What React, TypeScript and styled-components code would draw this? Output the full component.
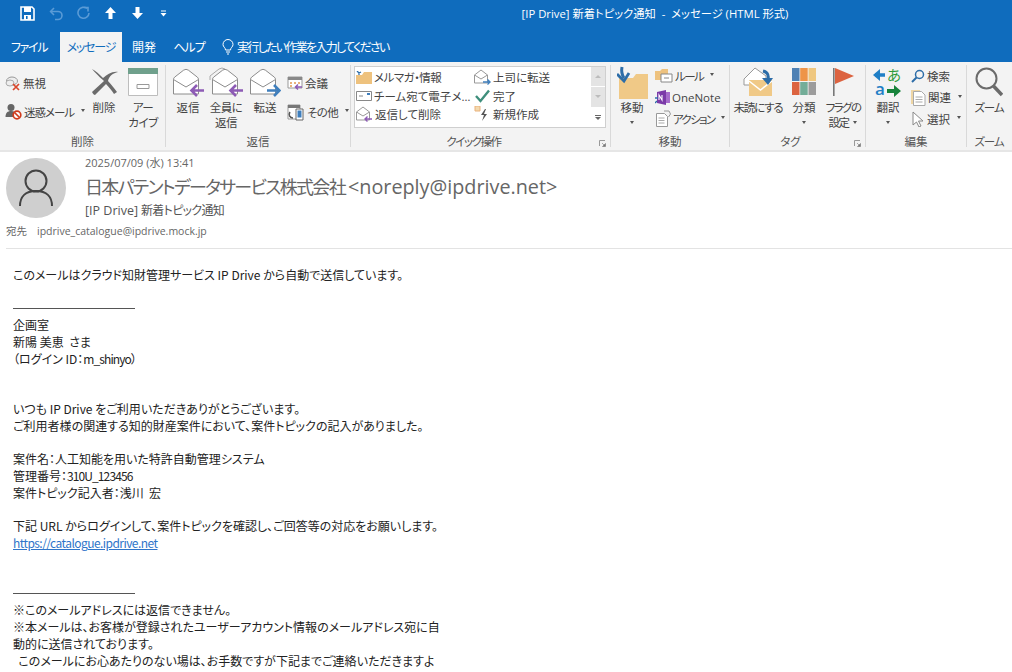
import React from "react";
import styled, { createGlobalStyle } from "styled-components";

const Global = createGlobalStyle`
  html, body { margin: 0; padding: 0; background: #fff; }
  body { font-family: "Open Sans", "Noto Sans CJK JP", sans-serif; font-feature-settings: "palt"; overflow: hidden; }
`;
const Page = styled.div`width: 1012px; height: 672px; overflow: hidden; display: flex; flex-direction: column; background: #fff;`;
const TitleBar = styled.div`height: 32px; padding-bottom: 6px; box-sizing: border-box; background: #0f6cbd; display: flex; align-items: center; color: #fff; flex: none;`;
const QuickAccess = styled.div`display: flex; align-items: center; width: 180px; padding-left: 19px; box-sizing: border-box; gap: 10px;`;
const QatSlot = styled.span`width: 17px; height: 17px; display: flex; align-items: center; justify-content: center; margin-right: ${p => p.$mr ?? 0}px;`;
const TitleText = styled.div`flex: 1; text-align: center; font-size: 11.3px; padding-left: 118px; white-space: pre;`;
const TabBar = styled.div`height: 30px; background: #0f6cbd; display: flex; align-items: stretch; padding-left: 11px; font-size: 12px; color: #fff; flex: none;`;
const Tab = styled.div`display: flex; align-items: center; justify-content: center; white-space: nowrap; width: ${p => p.$w}px; margin-right: ${p => p.$mr ?? 0}px; letter-spacing: ${p => p.$ls ?? 0}px;
  ${p => p.$active ? "background:#f3f3f3;color:#0f6cbd;" : ""}`;
const Search = styled.div`display: flex; align-items: center; gap: 3px; margin-left: 17px; letter-spacing: -1.7px;`;
const Ribbon = styled.div`height: 90px; background: #f3f3f3; display: flex; color: #444; font-size: 11.5px; box-sizing: border-box; flex: none; border-bottom: 2px solid #e6e6e6;`;
const Group = styled.section`width: ${p => p.$w}px; height: 88px; box-sizing: border-box; padding-left: ${p => p.$pl ?? 0}px; display: flex; flex-direction: column; position: relative; flex: none;
  &::after { content: ""; position: absolute; right: 0; top: 3px; bottom: 3px; width: 1px; background: ${p => p.$last ? "transparent" : "#d9d9d9"}; }`;
const GroupBody = styled.div`height: 72px; display: flex;`;
const GroupLabel = styled.div`height: 16px; line-height: 16px; margin-left: ${p => -(p.$pl ?? 0)}px; text-align: center; font-size: 11.5px; color: #555; margin-right: ${p => p.$mr ?? 1}px; letter-spacing: ${p => p.$ls ?? 0}px;`;
const Launcher = styled.span`position: absolute; right: 5px; bottom: 3px; width: 7px; height: 7px; display: flex;`;
const Large = styled.div`width: ${p => p.$w}px; flex: none; display: flex; flex-direction: column; align-items: center; padding-top: 4px;`;
const LargeIcon = styled.div`height: 32px; display: flex; align-items: center; justify-content: center;`;
const LargeLabel = styled.div`margin-top: 2px; line-height: 15px; text-align: center; white-space: nowrap; display: flex; flex-direction: column; align-items: center; letter-spacing: ${p => p.$ls ?? 0}px;`;
const Stack = styled.div`display: flex; flex-direction: column; flex: none; padding-top: ${p => p.$top}px; margin-left: ${p => p.$ml ?? 0}px; width: ${p => p.$w}px;`;
const Small = styled.div`height: ${p => p.$h}px; display: flex; align-items: center; gap: 2px; white-space: nowrap; svg { flex: none; }`;
const SmallText = styled.span`letter-spacing: ${p => p.$ls ?? 0}px;`;
const Caret = styled.span`display: inline-block; width: 0; height: 0; border-left: 2.5px solid transparent; border-right: 2.5px solid transparent; border-top: 3px solid #555; margin: ${p => p.$block ? "6px 0" : "0 0 2px 5px"}; vertical-align: middle;`;
const QuickBox = styled.div`margin-top: 4px; width: 252px; height: 62px; display: flex; box-sizing: border-box; border: 1px solid #cfcfcf; background: #fff;`;
const QuickGrid = styled.div`flex: 1; display: grid; grid-template-columns: 118px 1fr; grid-auto-rows: 18.5px; padding: 1px 0 0 1px; font-size: 11.5px;`;
const QuickItem = styled.div`display: flex; align-items: center; gap: 2px; white-space: nowrap; letter-spacing: ${p => p.$ls ?? 0}px; svg { flex: none; }`;
const Scroller = styled.div`width: 14px; display: flex; flex-direction: column; gap: 1px; background: #fff;`;
const ScrollBtn = styled.div`flex: 1; display: flex; flex-direction: column; gap: 1px; align-items: center; justify-content: center; background: ${p => p.$on ? "#fff" : "#e4e4e4"};`;
const ScrollBar = styled.span`width: 6px; height: 1px; background: #666;`;
const Tri = styled.span`width: 0; height: 0; border-left: 3px solid transparent; border-right: 3px solid transparent;
  ${p => p.$up ? "border-bottom: 3px solid #bcbcbc;" : `border-top: 3px solid ${p.$on ? "#666" : "#bcbcbc"};`}`;
const Header = styled.header`height: 97px; margin-left: 6px; flex: none; box-sizing: border-box; border-bottom: 1px solid #e3e3e3; color: #666; display: flex; flex-direction: column;`;
const HeaderTop = styled.div`display: flex; height: 69px;`;
const Avatar = styled.div`width: 60px; height: 60px; border-radius: 50%; background: #cfcfcf; margin-top: 6px; display: flex; align-items: center; justify-content: center; flex: none;`;
const HeaderText = styled.div`margin-left: 19px; display: flex; flex-direction: column;`;
const DateText = styled.div`font-size: 11px; line-height: 16px; margin-top: 3px;`;
const Sender = styled.div`font-size: 19.8px; line-height: 30px; margin-top: 1px; white-space: nowrap; color: #666; display: flex; align-items: baseline; gap: 3px;`;
const SenderName = styled.span`font-size: 18px; letter-spacing: -1.7px;`;
const Subject = styled.div`font-size: 12.5px; line-height: 18px; color: #555; display: flex; gap: 3px;`;
const SubjectJp = styled.span`font-size: 12px; letter-spacing: -0.7px;`;
const ToLine = styled.div`font-size: 10.5px; line-height: 16px; margin-top: 2px; display: flex; gap: 10px; color: #666;`;
const Body = styled.main`padding: 18px 0 0 13px; color: #222; font-family: "Noto Sans CJK JP", sans-serif; font-size: 12px;`;
const Line = styled.div`height: 16.78px; line-height: 16.78px; white-space: pre;`;
const Tight = styled.span`letter-spacing: -0.9px;`;
const Rule = styled.div`height: 16.78px; display: flex; align-items: center;
  &::before { content: ""; width: 122px; height: 1px; background: #555; }`;
const Link = styled.a`color: #2f75c9; text-decoration: underline; letter-spacing: -0.55px;`;

const Qat = {
  save: <svg width="15" height="15" viewBox="0 0 15 15"><path d="M1 1h11l2 2v11H1z" fill="none" stroke="#fff" strokeWidth="1.6"/><path d="M4 1h7v5H4zM4 9h7v5H4z" fill="#fff"/><path d="M6 10h1.600v3H6z" fill="#0f6cbd"/></svg>,
  undo: <svg width="15" height="15" viewBox="0 0 15 15" fill="none" stroke="#5a9bd6" strokeWidth="1.6"><path d="M5 2L1.600 5.500 5 9"/><path d="M2 5.500h7a4 4 0 0 1 0 8H6"/></svg>,
  redo: <svg width="15" height="15" viewBox="0 0 15 15" fill="none" stroke="#5a9bd6" strokeWidth="1.6"><path d="M11 2.500A5.500 5.500 0 1 0 13 7"/><path d="M7.500 1.500h4.500v4"/></svg>,
  up: <svg width="13" height="14" viewBox="0 0 13 14" fill="#fff"><path d="M6.500 1L12 7H8.500v6h-4V7H1z"/></svg>,
  down: <svg width="13" height="14" viewBox="0 0 13 14" fill="#fff"><path d="M6.500 13L12 7H8.500V1h-4v6H1z"/></svg>,
  more: <svg width="7" height="7" viewBox="0 0 7 7" fill="#fff"><path d="M1 0.500h5v1H1zM0.500 3h6L3.500 6.500z"/></svg>,
};

const EnvShape = () => (<>
  <path d="M1.500 12.500q0-1.500 1.200-2.400l9-7q2.300-1.600 4.600 0l9 7q1.200.9 1.200 2.400V27h-25z" fill="#fff" stroke="#8c8c8c"/>
  <path d="M1.500 12.500L14 20l12.500-7.500" fill="none" stroke="#8c8c8c"/>
</>);
const ArrowL = ({ color }: { color: string }) => <path d="M32 23.500H19.500M25 18l-5.500 5.500L25 29" fill="none" stroke={color} strokeWidth="2.600"/>;
const ArrowR = ({ color }: { color: string }) => <path d="M18 23.500h12.500M25 18l5.500 5.500L25 29" fill="none" stroke={color} strokeWidth="2.600"/>;

const I = {
  ignore: <svg width="16" height="16" viewBox="0 0 16 16"><ellipse cx="7" cy="6" rx="5.500" ry="4" fill="#eee" stroke="#999"/><ellipse cx="5" cy="8" rx="4" ry="3" fill="#eee" stroke="#aaa"/><path d="M8 9l6 6M14 9l-6 6" stroke="#d9472b" strokeWidth="1.700"/></svg>,
  junk: <svg width="17" height="17" viewBox="0 0 17 17"><circle cx="6" cy="4.500" r="3.500" fill="#666"/><path d="M0.500 14c0-4 2-6 5.500-6s5 1.500 5 3v3z" fill="#666"/><circle cx="12" cy="12" r="3.800" fill="#fff" stroke="#d13b1c" strokeWidth="1.700"/><path d="M9.500 9.500l5 5" stroke="#d13b1c" strokeWidth="1.700"/></svg>,
  del: <svg width="28" height="28" viewBox="0 0 28 28"><path d="M2 1C8 8 12 11 14 13L2 24c1 2 2 3 3 3l11-11c3 3 6 7 8 10l3-2c-3-4-6-8-9-11C19 8 23 5 28 4c-6-1-11 3-15 6C9 6 6 3 2 1z" fill="#6b6b6b"/></svg>,
  archive: <svg width="30" height="28" viewBox="0 0 30 28"><path d="M0.500 0.500h29v27h-29z" fill="#fff" stroke="#bdbdbd"/><path d="M0 0h30v6H0z" fill="#6fa08c"/><path d="M9 16.500h12v4H9z" fill="#fff" stroke="#999"/></svg>,
  reply: <svg width="32" height="30" viewBox="0 0 32 30"><EnvShape/><ArrowL color="#8d5bb5"/></svg>,
  replyAll: <svg width="34" height="30" viewBox="-2 0 34 30"><path d="M-1 13V9l9-7q3-2 6 0" fill="none" stroke="#aaa"/><EnvShape/><ArrowL color="#8d5bb5"/></svg>,
  forward: <svg width="32" height="30" viewBox="0 0 32 30"><EnvShape/><ArrowR color="#3f7fbd"/></svg>,
  meeting: <svg width="16" height="16" viewBox="0 0 16 16"><path d="M1 2h14v11H1z" fill="#fff" stroke="#999"/><path d="M1 2h14v3H1z" fill="#888"/><path d="M3 7h2v2H3zM7 7h2v2H7zM11 7h2v2h-2zM3 10h2v2H3z" fill="#e9b27c"/><path d="M15 12H9M11 9.500L8.500 12l2.500 2.500" fill="none" stroke="#8d5bb5" strokeWidth="1.500"/></svg>,
  other: <svg width="18" height="18" viewBox="0 0 18 18"><path d="M1 2h12v14H1z" fill="#fff" stroke="#999"/><path d="M1 2h12v3H1z" fill="#777"/><path d="M9 6h7v11H9z" fill="#fff" stroke="#666"/><path d="M10.500 7.500h4v7h-4z" fill="#3f7fbd"/><path d="M3 9c-2 3 0 6 3 6" fill="none" stroke="#555" strokeWidth="1.500"/></svg>,
  folderMail: <svg width="16" height="13" viewBox="0 0 16 13"><path d="M0 4h6l2-3h8v12H0z" fill="#eec27e"/><path d="M1 0l2 2 2-1M3 2v2" stroke="#2d6da8" strokeWidth="1.300" fill="none"/></svg>,
  team: <svg width="16" height="12" viewBox="0 0 16 12"><path d="M0.500 1.500h15v9H.5z" fill="#fff" stroke="#888"/><path d="M3 6h4" stroke="#888"/><path d="M11 3h3v2h-3z" fill="#3f7fbd"/></svg>,
  replyDel: <svg width="17" height="16" viewBox="0 0 17 16"><path d="M0.500 6L7 1l6.500 5v8H.5z" fill="#fff" stroke="#999"/><path d="M.5 6L7 10l6.500-4" fill="none" stroke="#999"/><path d="M16 13H9M11.500 10.500L9 13l2.500 2.500" fill="none" stroke="#8d5bb5" strokeWidth="1.400"/></svg>,
  toBoss: <svg width="17" height="16" viewBox="0 0 17 16"><path d="M0.500 6L7 1l6.500 5v8H.5z" fill="#fff" stroke="#999"/><path d="M.5 6L7 10l6.500-4" fill="none" stroke="#999"/><path d="M9 13h7M13.500 10.500L16 13l-2.500 2.500" fill="none" stroke="#3f7fbd" strokeWidth="1.400"/></svg>,
  check: <svg width="17" height="14" viewBox="0 0 17 14"><path d="M2 7l4.500 5L15 1.500" fill="none" stroke="#3f8f7c" strokeWidth="2.400"/></svg>,
  bolt: <svg width="17" height="16" viewBox="0 0 17 16"><path d="M1 0h5v5H1z" fill="#f3d9ae" stroke="#e9b27c"/><path d="M11 3L7 9h3l-2 6 5-7h-3l2-5z" fill="#555"/></svg>,
  launcher: <svg width="7" height="7" viewBox="0 0 7 7"><path d="M.5 6V.5H6" fill="none" stroke="#999"/><path d="M3 3l3 3M6.500 3.500v3h-3z" fill="#777" stroke="#777" strokeWidth=".6"/></svg>,
  move: <svg width="31" height="33" viewBox="0 0 31 33"><path d="M2 12h14l3-4h12v25H2z" fill="#f0c987"/><path d="M5 1c-1 5 0 8 2 11" fill="none" stroke="#2d6da8" strokeWidth="3"/><path d="M0 8l7 7 5-8" fill="none" stroke="#2d6da8" strokeWidth="2.800"/></svg>,
  rule: <svg width="18" height="15" viewBox="0 0 18 15"><path d="M0 3h5l2-2h6v11H0z" fill="#eec27e"/><path d="M6 6h11v8H6z" fill="#fff" stroke="#888"/><path d="M9 10h5" stroke="#888"/></svg>,
  onenote: <svg width="15" height="15" viewBox="0 0 15 15"><path d="M2 2l9-2v15l-9-2z" fill="#7b3aa8"/><path d="M11 2h4v11h-4z" fill="#a66ccb"/><path d="M4 10V5l3 5V5" fill="none" stroke="#fff" strokeWidth="1.100"/><path d="M0 8h3M2 11l-2 2" stroke="#2d6da8" strokeWidth="1.300"/></svg>,
  action: <svg width="16" height="17" viewBox="0 0 16 17"><path d="M1.500 3.500h8l3 3v10h-11z" fill="#fff" stroke="#999"/><path d="M3.500 8h6M3.500 10.500h6M3.500 13h6" stroke="#aaa"/><path d="M9 1h5l1.500 3-2 3" fill="none" stroke="#999"/></svg>,
  unread: <svg width="30" height="30" viewBox="0 0 30 30"><path d="M1 12L12 1l11 8v9H1z" fill="#fff" stroke="#999"/><path d="M6 13h23v16H6z" fill="#f0c987"/><path d="M6 14l11.500 9L29 14" fill="none" stroke="#fff" strokeWidth="1.500"/><path d="M20 4c5 1 6 5 5 10" fill="none" stroke="#2d6da8" strokeWidth="3"/><path d="M19 11l6 7 5-7z" fill="#2d6da8"/></svg>,
  cats: <svg width="24" height="28" viewBox="0 0 24 28"><path d="M0 0h7.500v13H0z" fill="#4f81b4"/><path d="M8.200 0h7.500v13H8.200z" fill="#ee9448"/><path d="M16.500 0H24v13h-7.500z" fill="#efc77f"/><path d="M0 14h7.500v13H0z" fill="#dc6340"/><path d="M8.200 14h7.500v13H8.200z" fill="#73ad98"/><path d="M16.500 14H24v13h-7.500z" fill="#9c9c9c"/></svg>,
  flag: <svg width="22" height="29" viewBox="0 0 22 29"><path d="M1 0h1.600v28H1z" fill="#777"/><path d="M3 0l19 8L3 16z" fill="#dc6340"/></svg>,
  translate: <svg width="30" height="32" viewBox="0 0 30 32" overflow="visible"><path d="M2 9h10" stroke="#1f7fc6" strokeWidth="3.500"/><path d="M7 3v12L0 9z" fill="#1f7fc6"/><text x="14" y="15" fontSize="14.5" fontFamily="Noto Sans CJK JP" fill="#2f9a3a">あ</text><text x="2" y="29" fontSize="17" fontFamily="Open Sans" fontWeight="600" fill="#1f7fc6">a</text><path d="M14 23h7v-4l7 6-7 6v-4h-7z" fill="#17833b"/></svg>,
  find: <svg width="14" height="14" viewBox="0 0 14 14"><circle cx="8.500" cy="5.500" r="4" fill="none" stroke="#2d6da8" strokeWidth="1.500"/><path d="M5.500 8.500L1 13" stroke="#2d6da8" strokeWidth="2"/></svg>,
  related: <svg width="15" height="17" viewBox="0 0 15 17"><path d="M0 1h9v14H0z" fill="#efd6a4"/><path d="M2.500 2.500h8l3.500 3.500v10.500H2.500z" fill="#fff" stroke="#aaa"/><path d="M4.500 8h7M4.500 10.500h7M4.500 13h7" stroke="#aaa"/></svg>,
  select: <svg width="14" height="16" viewBox="0 0 14 16"><path d="M2 1l10 9H7.500l2.500 5-2 1-2.500-5L2 14z" fill="#fff" stroke="#888"/></svg>,
  zoom: <svg width="28" height="30" viewBox="0 0 28 30"><circle cx="11.500" cy="11.500" r="10" fill="none" stroke="#6b6b6b" strokeWidth="2"/><path d="M18.500 19L27 28" stroke="#6b6b6b" strokeWidth="3.500"/></svg>,
  bulb: <svg width="12" height="16" viewBox="0 0 12 16" fill="none" stroke="#fff"><path d="M3.500 11C3.500 8.500 1 8 1 5.500a5 5 0 0 1 10 0C11 8 8.500 8.500 8.500 11z"/><path d="M4 13h4M5 15h2"/></svg>,
  person: <svg width="34" height="38" viewBox="0 0 34 38" fill="none" stroke="#444" strokeWidth="2"><circle cx="17" cy="12" r="10.500"/><path d="M1 37c0-9 5-15 16-15s16 6 16 15"/></svg>,
};

const LargeBtn = ({ w, icon, lines, caret, inlineCaret, ls }: { w: number; icon: React.ReactNode; lines: string[]; caret?: boolean; inlineCaret?: boolean; ls?: number }) => (
  <Large $w={w}>
    <LargeIcon>{icon}</LargeIcon>
    <LargeLabel $ls={ls}>
      {lines.map((l, i) => <span key={i}>{l}{inlineCaret && i === lines.length - 1 && <Caret />}</span>)}
      {caret && <Caret $block />}
    </LargeLabel>
  </Large>
);
const SmallBtn = ({ h, icon, text, caret, ls }: { h: number; icon: React.ReactNode; text: string; caret?: boolean; ls?: number }) => (
  <Small $h={h}>{icon}<SmallText $ls={ls}>{text}</SmallText>{caret && <Caret />}</Small>
);

const bodyLines: React.ReactNode[] = [
  "このメールはクラウド知財管理サービス IP Drive から自動で送信しています。", null, "rule",
  "企画室", "新陽 美恵  さま", <>（ログイン ID：<Tight>m_shinyo</Tight>）</>, null, null,
  "いつも IP Drive をご利用いただきありがとうございます。",
  "ご利用者様の関連する知的財産案件において、案件トピックの記入がありました。", null,
  "案件名：人工知能を用いた特許自動管理システム", <>管理番号：<Tight>310U_123456</Tight></>, "案件トピック記入者：浅川  宏", null,
  "下記 URL からログインして、案件トピックを確認し、ご回答等の対応をお願いします。", <Link href="#">https://catalogue.ipdrive.net</Link>, null, null, "rule",
  "※このメールアドレスには返信できません。",
  "※本メールは、お客様が登録されたユーザーアカウント情報のメールアドレス宛に自",
  "動的に送信されております。",
  "  このメールにお心あたりのない場は、お手数ですが下記までご連絡いただきますよ",
];

export default function App() {
  return (
    <Page>
      <Global />
      <TitleBar>
        <QuickAccess>
          <QatSlot $mr={2}>{Qat.save}</QatSlot>
          <QatSlot>{Qat.undo}</QatSlot>
          <QatSlot>{Qat.redo}</QatSlot>
          <QatSlot>{Qat.up}</QatSlot>
          <QatSlot $mr={-1}>{Qat.down}</QatSlot>
          <QatSlot>{Qat.more}</QatSlot>
        </QuickAccess>
        <TitleText>[IP Drive] 新着トピック通知  -  メッセージ (HTML 形式)</TitleText>
      </TitleBar>
      <TabBar>
        <Tab $w={36} $mr={13} $ls={-1.3}>ファイル</Tab>
        <Tab $w={62} $active $mr={9} $ls={-1.2}>メッセージ</Tab>
        <Tab $w={26} $mr={16}>開発</Tab>
        <Tab $w={32} $ls={-1}>ヘルプ</Tab>
        <Search>{I.bulb}<span>実行したい作業を入力してください</span></Search>
      </TabBar>
      <Ribbon>
        <Group $w={166} $pl={5}>
          <GroupBody>
            <Stack $top={6} $w={77}>
              <SmallBtn h={29} icon={I.ignore} text="無視" />
              <SmallBtn h={29} icon={I.junk} text="迷惑メール" caret ls={-1} />
            </Stack>
            <LargeBtn w={44} icon={I.del} lines={["削除"]} />
            <LargeBtn w={34} icon={I.archive} lines={["アー", "カイブ"]} ls={-0.5} />
          </GroupBody>
          <GroupLabel $pl={5}>削除</GroupLabel>
        </Group>
        <Group $w={185} $pl={4}>
          <GroupBody>
            <LargeBtn w={36} icon={I.reply} lines={["返信"]} />
            <LargeBtn w={40} icon={I.replyAll} lines={["全員に", "返信"]} ls={-0.5} />
            <LargeBtn w={38} icon={I.forward} lines={["転送"]} />
            <Stack $top={6} $ml={3} $w={65}>
              <SmallBtn h={29} icon={I.meeting} text="会議" />
              <SmallBtn h={29} icon={I.other} text="その他" caret ls={-0.6} />
            </Stack>
          </GroupBody>
          <GroupLabel $pl={4}>返信</GroupLabel>
        </Group>
        <Group $w={260} $pl={3}>
          <GroupBody>
            <QuickBox>
              <QuickGrid>
                <QuickItem $ls={-0.5}>{I.folderMail}<span>メルマガ・情報</span></QuickItem>
                <QuickItem>{I.toBoss}<span>上司に転送</span></QuickItem>
                <QuickItem>{I.team}<span>チーム宛て電子メ…</span></QuickItem>
                <QuickItem>{I.check}<span>完了</span></QuickItem>
                <QuickItem>{I.replyDel}<span>返信して削除</span></QuickItem>
                <QuickItem>{I.bolt}<span>新規作成</span></QuickItem>
              </QuickGrid>
              <Scroller>
                <ScrollBtn><Tri $up /></ScrollBtn>
                <ScrollBtn><Tri /></ScrollBtn>
                <ScrollBtn $on><ScrollBar /><Tri $on /></ScrollBtn>
              </Scroller>
            </QuickBox>
          </GroupBody>
          <GroupLabel $pl={3} $mr={15} $ls={-1.4}>クイック操作</GroupLabel>
          <Launcher>{I.launcher}</Launcher>
        </Group>
        <Group $w={119}>
          <GroupBody>
            <LargeBtn w={42} icon={I.move} lines={["移動"]} caret />
            <Stack $top={3} $ml={2} $w={74}>
              <SmallBtn h={21.5} icon={I.rule} text="ルール" caret ls={-1.5} />
              <SmallBtn h={21.5} icon={I.onenote} text="OneNote" />
              <SmallBtn h={21.5} icon={I.action} text="アクション" caret ls={-1.7} />
            </Stack>
          </GroupBody>
          <GroupLabel>移動</GroupLabel>
        </Group>
        <Group $w={136}>
          <GroupBody>
            <LargeBtn w={56} icon={I.unread} lines={["未読にする"]} ls={-1.2} />
            <LargeBtn w={36} icon={I.cats} lines={["分類"]} caret />
            <LargeBtn w={42} icon={I.flag} lines={["フラグの", "設定"]} inlineCaret ls={-1.6} />
          </GroupBody>
          <GroupLabel $mr={15}>タグ</GroupLabel>
          <Launcher>{I.launcher}</Launcher>
        </Group>
        <Group $w={101}>
          <GroupBody>
            <LargeBtn w={44} icon={I.translate} lines={["翻訳"]} caret />
            <Stack $top={3} $ml={1} $w={55}>
              <SmallBtn h={21.5} icon={I.find} text="検索" />
              <SmallBtn h={21.5} icon={I.related} text="関連" caret />
              <SmallBtn h={21.5} icon={I.select} text="選択" caret />
            </Stack>
          </GroupBody>
          <GroupLabel>編集</GroupLabel>
        </Group>
        <Group $w={45} $last>
          <GroupBody>
            <LargeBtn w={44} icon={I.zoom} lines={["ズーム"]} ls={-1} />
          </GroupBody>
          <GroupLabel $ls={-1}>ズーム</GroupLabel>
        </Group>
      </Ribbon>
      <Header>
        <HeaderTop>
          <Avatar>{I.person}</Avatar>
          <HeaderText>
            <DateText>2025/07/09 (水) 13:41</DateText>
            <Sender><SenderName>日本パテントデータサービス株式会社</SenderName><span>&lt;noreply@ipdrive.net&gt;</span></Sender>
            <Subject><span>[IP Drive]</span><SubjectJp>新着トピック通知</SubjectJp></Subject>
          </HeaderText>
        </HeaderTop>
        <ToLine><span>宛先</span><span>ipdrive_catalogue@ipdrive.mock.jp</span></ToLine>
      </Header>
      <Body>
        {bodyLines.map((l, i) => l === "rule" ? <Rule key={i} /> : <Line key={i}>{l ?? " "}</Line>)}
      </Body>
    </Page>
  );
}
